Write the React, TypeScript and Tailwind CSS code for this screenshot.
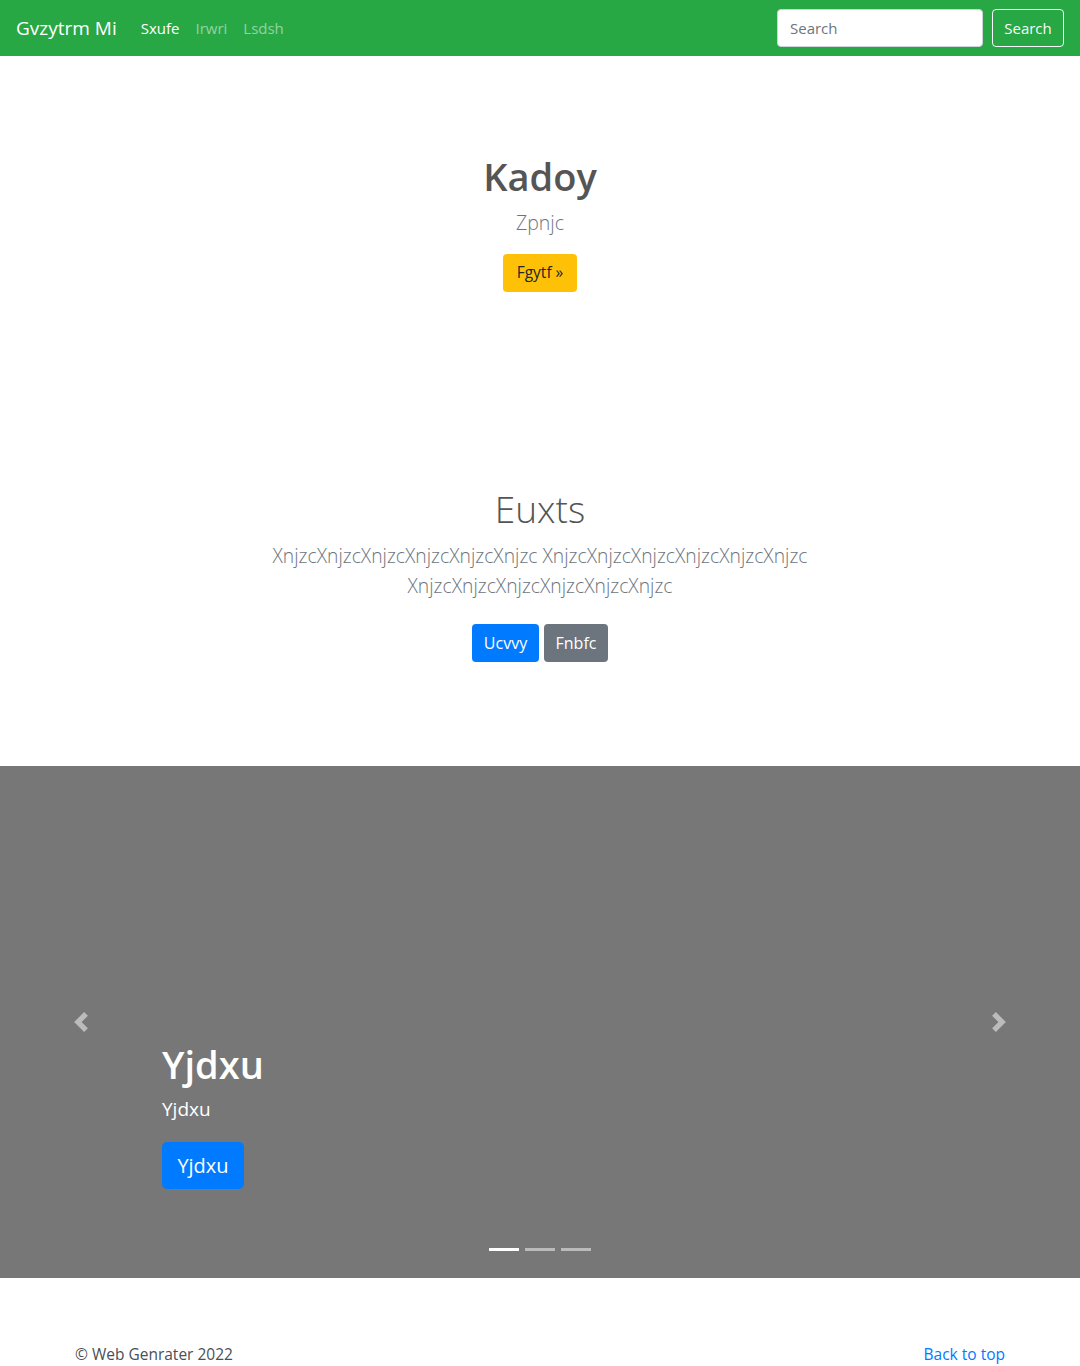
import React from 'react'

const font = { fontFamily: '"Open Sans", "Noto Sans", "Liberation Sans", sans-serif' }

function Chevron({ dir }: { dir: 'left' | 'right' }) {
  return (
    <svg width="20" height="20" viewBox="0 0 8 8" className="opacity-50">
      {dir === 'left' ? (
        <path fill="#fff" d="M5.25 0l-4 4 4 4 1.5-1.5L4.25 4l2.5-2.5L5.25 0z" />
      ) : (
        <path fill="#fff" d="M2.75 0l-1.5 1.5L3.75 4l-2.5 2.5L2.75 8l4-4-4-4z" />
      )}
    </svg>
  )
}

export default function App() {
  return (
    <div className="min-h-[1366px] bg-white text-[#212529]" style={font}>
      {/* Navbar */}
      <nav className="flex h-[56px] items-center bg-[#28a745] px-4">
        <span className="mr-4 text-[19px] leading-[30px] text-white">Gvzytrm Mi</span>
        <ul className="flex items-center">
          <li className="px-2 text-[15px] text-white">Sxufe</li>
          <li className="px-2 text-[15px] text-white/50">Irwri</li>
          <li className="px-2 text-[15px] text-white/50">Lsdsh</li>
        </ul>
        <div className="ml-auto flex items-center">
          <input
            placeholder="Search"
            className="mr-[9px] h-[38px] w-[206px] rounded-[4px] border border-[#ced4da] bg-white px-3 text-[15px] text-[#495057] placeholder:text-[#6c757d] outline-none"
          />
          <button className="h-[38px] w-[72px] rounded-[4px] border border-[#f8f9fa] text-[15px] text-[#f8f9fa]">
            Search
          </button>
        </div>
      </nav>

      {/* Hero */}
      <section className="flex flex-col items-center pt-[96px] pb-[97px] text-center">
        <h1 className="mb-2 text-[38px] font-semibold leading-[48px] text-[#555]">Kadoy</h1>
        <p className="mb-4 text-[19.5px] font-light leading-[30px] text-[#6c757d]">Zpnjc</p>
        <button className="h-[38px] w-[74px] rounded-[4px] bg-[#ffc107] text-[15.5px] text-[#212529]">
          Fgytf »
        </button>
      </section>

      {/* Second section */}
      <section className="flex flex-col items-center pt-[96px] pb-[97px] text-center">
        <h1 className="mb-2 text-[37px] font-light leading-[48px] text-[#555]">Euxts</h1>
        <p className="mx-auto mb-4 max-w-[610px] text-[19.3px] font-light leading-[30px] text-[#6c757d]">
          XnjzcXnjzcXnjzcXnjzcXnjzcXnjzc XnjzcXnjzcXnjzcXnjzcXnjzcXnjzc XnjzcXnjzcXnjzcXnjzcXnjzcXnjzc
        </p>
        <div className="mt-[7px] mb-[7px] flex gap-[5px]">
          <button className="h-[38px] w-[67px] rounded-[4px] bg-[#007bff] text-[16px] text-white">Ucvvy</button>
          <button className="h-[38px] w-[64px] rounded-[4px] bg-[#6c757d] text-[16px] text-white">Fnbfc</button>
        </div>
      </section>

      {/* Carousel */}
      <section className="relative h-[512px] bg-[#777]">
        <div className="absolute inset-y-0 left-0 flex w-[15%] items-center justify-center">
          <Chevron dir="left" />
        </div>
        <div className="absolute inset-y-0 right-0 flex w-[15%] items-center justify-center">
          <Chevron dir="right" />
        </div>
        <div className="absolute bottom-[89px] left-[15%] right-[15%] text-left text-white">
          <h1 className="mb-[6px] text-[38px] font-semibold leading-[48px]">Yjdxu</h1>
          <p className="mb-[18px] text-[19px] leading-[30px]">Yjdxu</p>
          <button className="h-[47px] w-[82px] rounded-[5px] bg-[#007bff] text-[20px] text-white">Yjdxu</button>
        </div>
        <div className="absolute bottom-[27px] left-0 right-0 flex justify-center gap-[6px]">
          <span className="h-[3px] w-[30px] bg-white" />
          <span className="h-[3px] w-[30px] bg-white/50" />
          <span className="h-[3px] w-[30px] bg-white/50" />
        </div>
      </section>

      {/* Footer */}
      <footer className="mx-auto flex w-[960px] justify-between px-[15px] pt-[66px] text-[15.5px] leading-[20px]">
        <p className="text-[#495057]">© Web Genrater 2022</p>
        <span className="text-[#007bff]">Back to top</span>
      </footer>
    </div>
  )
}
